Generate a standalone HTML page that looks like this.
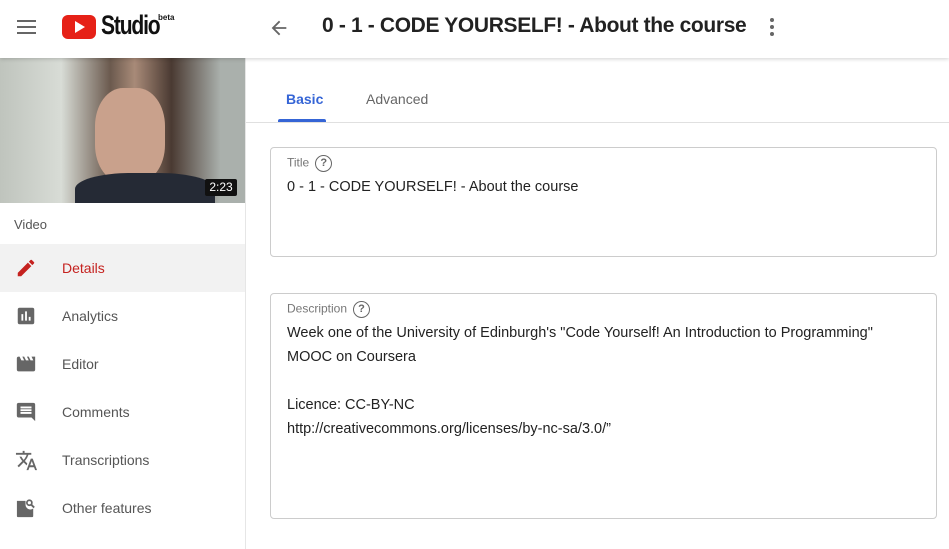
<!DOCTYPE html>
<html><head><style>
*{margin:0;padding:0;box-sizing:border-box}
body{width:949px;height:549px;overflow:hidden;background:#fff;font-family:"Liberation Sans",sans-serif;position:relative;color:#222}
.hdr{position:absolute;left:0;top:0;width:949px;height:58px;background:#fff;box-shadow:0 1px 4px rgba(0,0,0,.18);z-index:2}
.side{position:absolute;left:0;top:58px;width:246px;height:491px;border-right:1px solid #e6e6e6}
.thumb{position:absolute;left:0;top:0;width:245px;height:145px;background:linear-gradient(90deg,#bfc4bd 0%,#d8dcd6 25%,#6b5a4e 45%,#a88a78 55%,#4a3a32 70%,#aab0ac 90%);overflow:hidden}
.abs{position:absolute}
.nav{position:absolute;left:0;width:245px;height:48px;font-size:14px;color:#555}
.nav span{position:absolute;left:62px;top:16px}
.nav svg{position:absolute;left:15px;top:13px}
.field{position:absolute;left:270px;border:1px solid #ccc;border-radius:4px;width:667px}
.lbl{position:absolute;left:16px;font-size:12px;color:#777}
.q{display:inline-block;width:17px;height:17px;border:1.5px solid #666;border-radius:50%;font-size:11px;text-align:center;line-height:14px;color:#666;margin-left:6px;vertical-align:middle;font-weight:bold}
.val{position:absolute;left:16px;font-size:14.5px;color:#222;line-height:24px}
</style></head><body>
<div class="hdr">
  <div class="abs" style="left:17px;top:20px;width:19px;height:2px;background:#666;box-shadow:0 6px 0 #666,0 12px 0 #666"></div>
  <div class="abs" style="left:62px;top:15px;width:34px;height:24px;background:#e62117;border-radius:6px"></div>
  <div class="abs" style="left:75px;top:21px;width:0;height:0;border-left:10px solid #fff;border-top:6px solid transparent;border-bottom:6px solid transparent"></div>
  <div class="abs" style="left:101px;top:10px;font-size:27px;font-weight:bold;letter-spacing:-1.5px;transform:scaleX(.78);transform-origin:left;color:#111">Studio</div>
  <div class="abs" style="left:158px;top:13px;font-size:8px;font-weight:bold;color:#111">beta</div>
  <svg class="abs" style="left:268px;top:17px" width="22" height="22" viewBox="0 0 24 24"><path d="M20 11H7.8l5.6-5.6L12 4l-8 8 8 8 1.4-1.4L7.8 13H20z" fill="#666"/></svg>
  <div class="abs" style="left:322px;top:14px;font-size:21px;font-weight:bold;color:#222;letter-spacing:-0.35px">0 - 1 - CODE YOURSELF! - About the course</div>
  <div class="abs" style="left:770px;top:18px;width:4px;height:4px;border-radius:50%;background:#666;box-shadow:0 7px 0 #666,0 14px 0 #666"></div>
</div>
<div class="side">
  <div class="thumb">
    <div class="abs" style="left:95px;top:30px;width:70px;height:95px;border-radius:40%;background:#c9a18c"></div>
    <div class="abs" style="left:75px;top:115px;width:140px;height:40px;border-radius:40% 40% 0 0;background:#252a35"></div>
    <div class="abs" style="left:205px;top:121px;width:32px;height:17px;background:#111;color:#fff;font-size:12px;text-align:center;line-height:17px;border-radius:2px">2:23</div>
  </div>
  <div class="abs" style="left:14px;top:159px;font-size:13px;color:#555">Video</div>
  <div class="nav" style="top:186px;background:#f2f2f2;color:#c5221f"><svg width="22" height="22" viewBox="0 0 24 24"><path d="M3 17.25V21h3.75L17.8 9.94l-3.75-3.75zM20.7 7.04a1 1 0 000-1.41l-2.34-2.34a1 1 0 00-1.41 0l-1.83 1.83 3.75 3.75z" fill="#c5221f"/></svg><span>Details</span></div>
  <div class="nav" style="top:234px"><svg width="22" height="22" viewBox="0 0 24 24"><path d="M19 3H5a2 2 0 00-2 2v14a2 2 0 002 2h14a2 2 0 002-2V5a2 2 0 00-2-2zM9 17H7v-7h2zm4 0h-2V7h2zm4 0h-2v-4h2z" fill="#666"/></svg><span>Analytics</span></div>
  <div class="nav" style="top:282px"><svg width="22" height="22" viewBox="0 0 24 24"><path d="M18 4l2 4h-3l-2-4h-2l2 4h-3l-2-4H8l2 4H7L5 4H4a2 2 0 00-2 2v12a2 2 0 002 2h16a2 2 0 002-2V4z" fill="#666"/></svg><span>Editor</span></div>
  <div class="nav" style="top:330px"><svg width="22" height="22" viewBox="0 0 24 24"><path d="M21.99 4A2 2 0 0020 2H4a2 2 0 00-2 2v12a2 2 0 002 2h14l4 4zM18 14H6v-2h12zm0-3H6V9h12zm0-3H6V6h12z" fill="#666"/></svg><span>Comments</span></div>
  <div class="nav" style="top:378px"><svg width="23" height="23" viewBox="0 0 24 24"><path d="M12.87 15.07l-2.54-2.51.03-.03A17.5 17.5 0 0014.07 6H17V4h-7V2H8v2H1v2h11.17C11.5 7.92 10.44 9.75 9 11.35 8.07 10.32 7.3 9.19 6.69 8h-2c.73 1.63 1.73 3.170 2.98 4.56l-5.09 5.02L4 19l5-5 3.11 3.11zM18.5 10h-2L12 22h2l1.12-3h4.75L21 22h2zm-2.62 7l1.62-4.33L19.12 17z" fill="#666"/></svg><span>Transcriptions</span></div>
  <div class="nav" style="top:426px"><svg width="23" height="23" viewBox="0 0 24 24"><path d="M2 4h9v4a5 5 0 008 4v8a1 1 0 01-1 1H3a1 1 0 01-1-1z" fill="#666"/><circle cx="15" cy="6" r="2.6" fill="none" stroke="#666" stroke-width="1.8"/><path d="M17 8l3 3" stroke="#666" stroke-width="2"/></svg><span>Other features</span></div>
</div>
<div class="abs" style="left:286px;top:91px;font-size:14px;color:#3565d6;font-weight:bold">Basic</div>
<div class="abs" style="left:278px;top:119px;width:48px;height:3px;background:#3565d6;border-radius:2px 2px 0 0"></div>
<div class="abs" style="left:366px;top:91px;font-size:14px;color:#666">Advanced</div>
<div class="abs" style="left:246px;top:122px;width:703px;height:1px;background:#e0e0e0"></div>
<div class="field" style="top:147px;height:110px">
  <div class="lbl" style="top:7px">Title<span class="q">?</span></div>
  <div class="val" style="top:27px">0 - 1 - CODE YOURSELF! - About the course</div>
</div>
<div class="field" style="top:293px;height:226px">
  <div class="lbl" style="top:7px">Description<span class="q">?</span></div>
  <div class="val" style="top:27px">Week one of the University of Edinburgh's "Code Yourself! An Introduction to Programming"<br>MOOC on Coursera<br><br>Licence: CC-BY-NC<br>http://creativecommons.org/licenses/by-nc-sa/3.0/”</div>
</div>
</body></html>
